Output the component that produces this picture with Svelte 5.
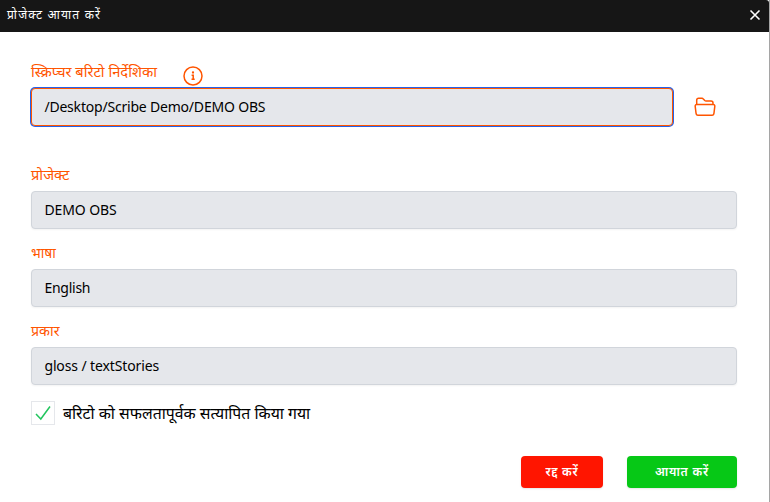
<script>
  const fields = [
    { label: 'प्रोजेक्ट', value: 'DEMO OBS', spacing: '-0.1px', size: '14.7px', leading: '18px' },
    { label: 'भाषा', value: 'English', spacing: '-0.25px', size: '13.8px', leading: '20px' },
    { label: 'प्रकार', value: 'gloss / textStories', spacing: '-0.12px', size: '14.2px', leading: '20px' }
  ];
</script>

<div class="dialog">
  <header>
    <h1>प्रोजेक्ट आयात करें</h1>
    <button class="close" aria-label="Close">
      <svg width="12" height="12" viewBox="0 0 12 12"><path d="M1.5 1.5l9 9m0-9l-9 9" /></svg>
    </button>
  </header>
  <main>
    <div class="heading">
      <span class="label">स्क्रिप्चर बरिटो निर्देशिका</span>
      <svg class="info" width="20" height="20" viewBox="0 0 20 20">
        <circle cx="10" cy="10" r="9" />
        <circle class="dot" cx="10" cy="6.5" r="1.15" />
        <path d="M8.6 9.3h1.6v3.9M8.5 13.3h3.2" />
      </svg>
    </div>
    <div class="picker">
      <div class="box focused"><span class="path">/Desktop/Scribe Demo/DEMO OBS</span></div>
      <svg class="folder" width="24" height="24" viewBox="0 0 24 24">
        <path d="M3.7 9.8V5.2Q3.7 3.3 5.6 3.3H9Q9.8 3.3 10.3 3.9L11.8 5.5Q12.3 6 13 6H18Q20 6 20 8V9.8M3.6 9.6H20.4Q22 9.7 21.8 11.4L21 18Q20.8 20.3 19 20.3H5Q3.2 20.3 3 18L2.2 11.4Q2 9.7 3.6 9.6Z" />
      </svg>
    </div>
    {#each fields as field}
      <div class="field">
        <span class="label" style="font-size: {field.size}; line-height: {field.leading}">{field.label}</span>
        <div class="box"><span style="letter-spacing: {field.spacing}">{field.value}</span></div>
      </div>
    {/each}
    <div class="status">
      <span class="check"><svg width="18" height="18" viewBox="0 0 18 18"><path d="M2 10l4.8 5L16 2.5" /></svg></span>
      <span class="message">बरिटो को सफलतापूर्वक सत्यापित किया गया</span>
    </div>
    <footer>
      <button class="cancel">रद्द करें</button>
      <button class="import">आयात करें</button>
    </footer>
  </main>
</div>

<style>
  :global(body) { background: #fff; }
  * { box-sizing: border-box; }
  .dialog {
    width: 770px;
    height: 502px;
    overflow: hidden;
    background: #fff;
    border-right: 1px solid #a5a5a5;
    font-family: "Noto Sans", "Open Sans", sans-serif;
    color: #000;
  }
  header {
    height: 32px;
    background: #161616;
    border-top-right-radius: 3px;
    display: flex;
    align-items: center;
    justify-content: space-between;
    padding: 0 8px 3px 7px;
  }
  h1 { margin: 0; font-size: 12px; line-height: 16px; font-weight: 400; color: #fff; letter-spacing: 1.2px; white-space: nowrap; }
  button { border: 0; padding: 0; font-family: inherit; }
  .close { width: 12px; height: 12px; background: none; display: flex; }
  svg { display: block; fill: none; flex: none; }
  .close path { stroke: #fff; stroke-width: 1.6; }
  main { padding: 30px 32px 0 31px; }
  .heading { display: flex; height: 26px; }
  .label { display: block; font-size: 14px; font-weight: 400; line-height: 20px; color: #ff5500; white-space: nowrap; }
  .heading .label { width: 126px; font-size: 14.65px; line-height: 18px; }
  .info { margin: 4px 0 0 26px; stroke: #ff5500; stroke-width: 1.5; }
  .info .dot { fill: #ff5500; stroke: none; }
  .picker { display: flex; align-items: center; height: 38px; margin-bottom: 39px; }
  .picker .box { width: 642px; }
  .folder { margin-left: 20px; stroke: #ff5500; stroke-width: 1.5; stroke-linejoin: round; }
  .box {
    height: 38px;
    background: #e5e7eb;
    border: 1px solid #d1d5db;
    border-radius: 4px;
    box-shadow: 0 1px 2px rgba(0, 0, 0, 0.05);
    padding: 8px 12px 8px 12.4px;
    font-size: 14px;
    line-height: 20px;
    white-space: nowrap;
  }
  .box.focused { border-color: #ff5500; box-shadow: 0 0 0 1px #2563eb; }
  .path { letter-spacing: -0.2px; }
  .field { height: 78px; }
  .field .label { height: 26px; }
  .status { display: flex; height: 24px; align-items: center; margin-top: 2px; }
  .check { width: 24px; height: 24px; border: 1px solid #e5e7eb; padding: 2px; }
  .check path { stroke: #22c55e; stroke-width: 1.5; }
  .message { font-size: 15.8px; font-weight: 400; line-height: 24px; margin: -1px 0 0 8px; white-space: nowrap; }
  footer { display: flex; justify-content: flex-end; gap: 24px; margin-top: 31px; }
  footer button { height: 32px; border-radius: 4px; color: #fff; font-size: 12px; line-height: 16px; font-weight: 600; letter-spacing: 0.8px; box-shadow: 0 1px 2px rgba(0, 0, 0, 0.1); white-space: nowrap; }
  .cancel { width: 82px; background: #ff1500; }
  .import { width: 110px; background: #06c816; }
</style>
